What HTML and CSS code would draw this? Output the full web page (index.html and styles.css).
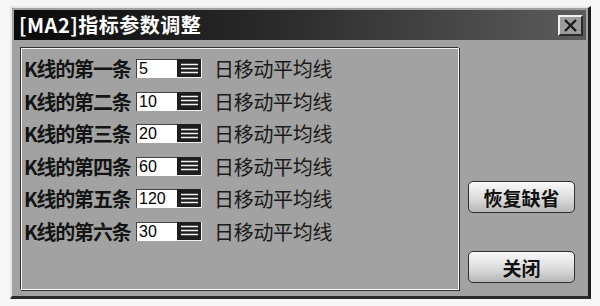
FILE: index.html
```html
<!DOCTYPE html>
<html lang="zh-CN">
<head>
  <meta charset="UTF-8">
  <title>[MA2]指标参数调整</title>
  <link rel="stylesheet" href="styles.css">
</head>
<body>

  <div class="dialog">
    <div class="titlebar">
      <span class="title">[MA2]指标参数调整</span>
      <span class="close-btn">
        <svg width="17" height="13" viewBox="0 0 17 13">
          <path d="M3 1 L14 12 M14 1 L3 12" stroke="#1a1a1a" stroke-width="2.4"/>
        </svg>
      </span>
    </div>

    <div class="content">
      <div class="groupbox">
        <div class="row">
          <span class="label">K线的第一条</span>
          <span class="num">5</span>
          <span class="spin"><svg width="23" height="17" viewBox="0 0 23 17"><path d="M3 4.5H20M3 8.5H20M3 12.5H20" stroke="#f2f2f2" stroke-width="1.6"/></svg></span>
          <span class="unit">日移动平均线</span>
        </div>
        <div class="row">
          <span class="label">K线的第二条</span>
          <span class="num">10</span>
          <span class="spin"><svg width="23" height="17" viewBox="0 0 23 17"><path d="M3 4.5H20M3 8.5H20M3 12.5H20" stroke="#f2f2f2" stroke-width="1.6"/></svg></span>
          <span class="unit">日移动平均线</span>
        </div>
        <div class="row">
          <span class="label">K线的第三条</span>
          <span class="num">20</span>
          <span class="spin"><svg width="23" height="17" viewBox="0 0 23 17"><path d="M3 4.5H20M3 8.5H20M3 12.5H20" stroke="#f2f2f2" stroke-width="1.6"/></svg></span>
          <span class="unit">日移动平均线</span>
        </div>
        <div class="row">
          <span class="label">K线的第四条</span>
          <span class="num">60</span>
          <span class="spin"><svg width="23" height="17" viewBox="0 0 23 17"><path d="M3 4.5H20M3 8.5H20M3 12.5H20" stroke="#f2f2f2" stroke-width="1.6"/></svg></span>
          <span class="unit">日移动平均线</span>
        </div>
        <div class="row">
          <span class="label">K线的第五条</span>
          <span class="num">120</span>
          <span class="spin"><svg width="23" height="17" viewBox="0 0 23 17"><path d="M3 4.5H20M3 8.5H20M3 12.5H20" stroke="#f2f2f2" stroke-width="1.6"/></svg></span>
          <span class="unit">日移动平均线</span>
        </div>
        <div class="row">
          <span class="label">K线的第六条</span>
          <span class="num">30</span>
          <span class="spin"><svg width="23" height="17" viewBox="0 0 23 17"><path d="M3 4.5H20M3 8.5H20M3 12.5H20" stroke="#f2f2f2" stroke-width="1.6"/></svg></span>
          <span class="unit">日移动平均线</span>
        </div>
      </div>

      <div class="buttons">
        <div class="btn btn-default">恢复缺省</div>
        <div class="btn btn-close">关闭</div>
      </div>
    </div>
  </div>

</body>
</html>
```

FILE: styles.css
```css
body {
  margin: 0;
  padding: 6px 0 0 10px;
  background-color: #f6f6f6;
  font-family: "Noto Sans CJK SC", "Liberation Sans", sans-serif;
}

.dialog {
  width: 572px;
  height: 284px;
  padding: 2px;
  background-color: #a2a2a2;
  border-top: 2px solid #e8e8e8;
  border-left: 2px solid #e8e8e8;
  border-right: 3px solid #1c1c1c;
  border-bottom: 3px solid #2a2a2a;
}

.titlebar {
  height: 30px;
  display: flex;
  align-items: center;
  justify-content: space-between;
  padding: 0 3px 0 5px;
  background: linear-gradient(to right, #0a0a0a 0%, #2a2a2a 45%, #5c5c5c 100%);
}

.title {
  color: #ffffff;
  font-size: 20px;
  font-weight: bold;
  letter-spacing: 0.5px;
  line-height: 30px;
}

.close-btn {
  width: 21px;
  height: 17px;
  display: flex;
  align-items: center;
  justify-content: center;
  background-color: #9c9c9c;
  border-top: 2px solid #f0f0f0;
  border-left: 2px solid #f0f0f0;
  border-right: 2px solid #2a2a2a;
  border-bottom: 2px solid #2a2a2a;
}

.content {
  display: flex;
  padding: 7px 0 0 6px;
  gap: 9px;
}

.groupbox {
  width: 434px;
  height: 230px;
  padding: 11px 0 0 3px;
  border-top: 1px solid #333333;
  border-left: 1px solid #333333;
  border-right: 1px solid #f4f4f4;
  border-bottom: 1px solid #f4f4f4;
  box-shadow: inset 1px 1px 0 #f4f4f4, -1px -1px 0 #a2a2a2, 1px 1px 0 #333333;
  display: flex;
  flex-direction: column;
}

.row {
  height: 32.6px;
  display: flex;
  align-items: flex-start;
}

.label {
  width: 112px;
  font-size: 20px;
  line-height: 20px;
  color: #141414;
  font-weight: bold;
  letter-spacing: -1.2px;
}

.num {
  width: 38px;
  height: 19px;
  padding-left: 3px;
  background-color: #ffffff;
  font-family: "Liberation Sans", sans-serif;
  font-size: 16px;
  line-height: 20px;
  color: #000000;
  box-shadow: inset 1px 1px 0 #444444;
}

.spin {
  width: 25px;
  height: 19px;
  display: flex;
  align-items: center;
  justify-content: center;
  background-color: #1e1e1e;
  border-right: 1px solid #f0f0f0;
  border-bottom: 1px solid #f0f0f0;
  box-sizing: border-box;
}

.unit {
  margin-left: 12px;
  font-size: 20px;
  line-height: 20px;
  color: #1a1a1a;
  letter-spacing: -0.3px;
}

.buttons {
  display: flex;
  flex-direction: column;
  padding-top: 134px;
  gap: 38px;
}

.btn {
  width: 105px;
  height: 30px;
  display: flex;
  align-items: center;
  justify-content: center;
  border: 1px solid #2e2e2e;
  border-radius: 5px;
  background: linear-gradient(to bottom, #fafafa 0%, #d8d8d8 60%, #b6b6b6 100%);
  font-size: 19px;
  font-weight: bold;
  color: #111111;
}
```
